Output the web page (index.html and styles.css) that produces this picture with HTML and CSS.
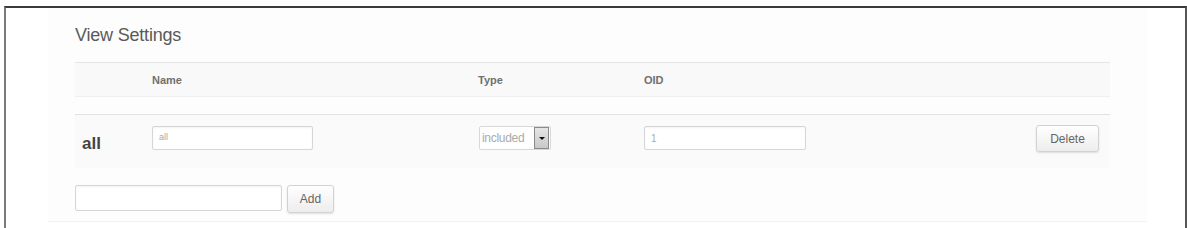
FILE: index.html
```html
<!DOCTYPE html>
<html>
<head>
<meta charset="utf-8">
<link rel="stylesheet" href="styles.css">
</head>
<body>
<div class="frame">
  <div class="panel">
    <h2 class="title">View Settings</h2>
    <div class="table">
      <div class="thead grid">
        <div></div>
        <div class="th">Name</div>
        <div class="th">Type</div>
        <div class="th">OID</div>
        <div></div>
      </div>
      <div class="row grid">
        <div class="label">all</div>
        <div><div class="input name-input"><span class="val small">all</span></div></div>
        <div>
          <div class="select">
            <span class="sel-text">included</span>
            <span class="sel-arrow"><span class="tri"></span></span>
          </div>
        </div>
        <div><div class="input oid-input"><span class="val">1</span></div></div>
        <div class="actions"><button class="btn delete">Delete</button></div>
      </div>
    </div>
    <div class="add-row">
      <div class="input add-input"></div>
      <button class="btn add">Add</button>
    </div>
  </div>
</div>
</body>
</html>
```

FILE: styles.css
```css
html, body {
  margin: 0;
  padding: 0;
  background: #ffffff;
  overflow: hidden;
}
body {
  font-family: "Liberation Sans", Arial, sans-serif;
  color: #555;
}
.frame {
  box-sizing: border-box;
  margin: 6px 0 0 4px;
  width: 1183px;
  height: 222px;
  border-top: 2px solid #3a3a3a;
  border-left: 2px solid #7a7a7a;
  border-right: 2px solid #555;
  background: #fff;
}
.panel {
  box-sizing: border-box;
  margin-left: 42px;
  width: 1099px;
  height: 214px;
  padding: 16px 0 0 27px;
  background: #fdfdfd;
  border-bottom: 1px solid #f2f2f2;
}
.title {
  margin: 0;
  font-size: 18px;
  line-height: 22px;
  font-weight: normal;
  color: #5a5a5a;
  letter-spacing: -0.2px;
}
.table {
  margin-top: 16px;
  width: 1035px;
}
.grid {
  display: grid;
  grid-template-columns: 77px 326px 166px 1fr auto;
}
.thead {
  height: 35px;
  border-top: 1px solid #e6e6e6;
  border-bottom: 1px solid #f0f0f0;
  background: #f9f9f9;
  align-items: center;
  box-sizing: border-box;
}
.th {
  font-size: 11px;
  font-weight: bold;
  color: #707070;
  padding-top: 1px;
}
.row {
  margin-top: 17px;
  border-top: 1px solid #e2e2e2;
  background: #fafafa;
  padding: 11px 11px 15px 0;
  align-items: start;
}
.label {
  font-size: 17px;
  font-weight: bold;
  color: #444;
  padding: 9px 0 0 7px;
  line-height: 18px;
}
.input {
  box-sizing: border-box;
  height: 24px;
  border: 1px solid #d6d6d6;
  border-radius: 2px;
  background: #fff;
  box-shadow: inset 0 1px 2px rgba(0,0,0,0.05);
  display: flex;
  align-items: center;
  padding-left: 6px;
}
.name-input { width: 161px; }
.oid-input { width: 162px; }
.val {
  font-size: 10px;
  color: #aaa;
}
.val.small { font-size: 9px; color: #a8a8a8; margin-top: -3px; }
.select {
  box-sizing: border-box;
  margin-left: 1px;
  width: 72px;
  height: 24px;
  border: 1px solid #d8d8d8;
  border-radius: 2px;
  background: #fff;
  display: flex;
  align-items: center;
}
.sel-text {
  flex: 1;
  font-size: 12px;
  color: #aaa;
  padding-left: 2px;
  letter-spacing: -0.3px;
}
.sel-arrow {
  box-sizing: border-box;
  width: 15px;
  height: 22px;
  margin-right: 1px;
  border: 1px solid #8a8a8a;
  background: linear-gradient(#e6e6e6, #c8c8c8);
  display: flex;
  align-items: center;
  justify-content: center;
}
.tri {
  width: 0;
  height: 0;
  border-left: 3px solid transparent;
  border-right: 3px solid transparent;
  border-top: 3px solid #111;
}
.actions {
  margin-top: -1px;
}
.btn {
  font-family: "Liberation Sans", Arial, sans-serif;
  font-size: 12px;
  color: #666;
  border: 1px solid #d2d2d2;
  border-radius: 3px;
  background: linear-gradient(#ffffff, #ededed);
  box-shadow: 0 1px 2px rgba(0,0,0,0.12);
  padding: 0;
  cursor: pointer;
}
.delete {
  width: 63px;
  height: 27px;
}
.add-row {
  margin-top: 17px;
  display: flex;
  align-items: flex-start;
  gap: 5px;
}
.add-input {
  width: 207px;
  height: 26px;
}
.add {
  width: 47px;
  height: 28px;
}
```
